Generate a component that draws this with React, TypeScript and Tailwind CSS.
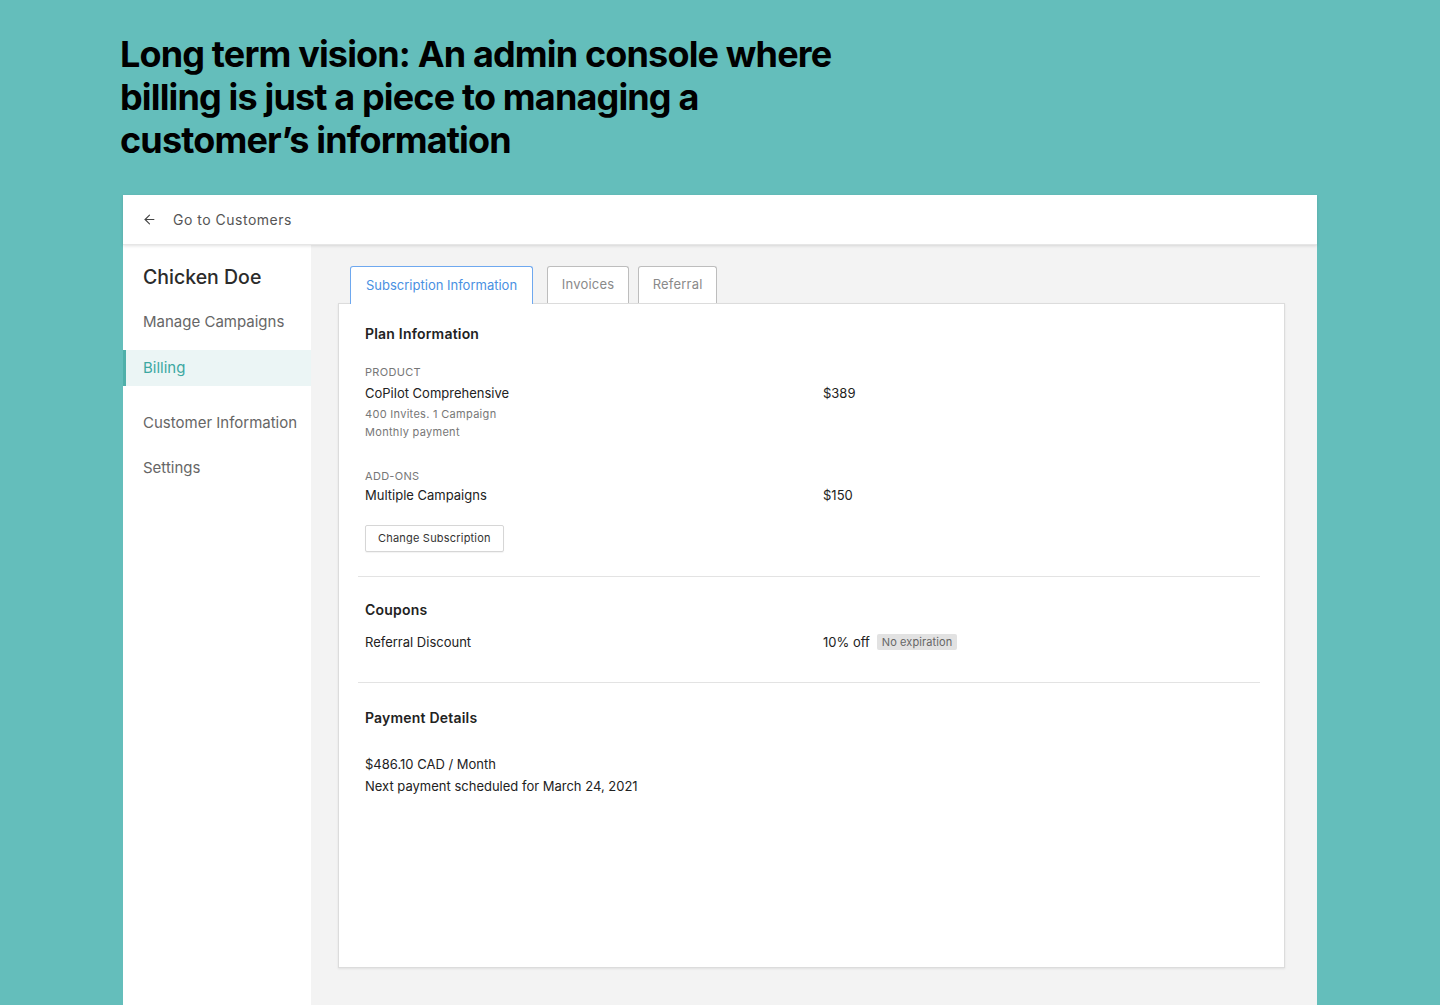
import { ArrowLeft } from 'lucide-react'

const font = { fontFamily: 'Inter, "Noto Sans", sans-serif' }

function Sidebar() {
  const items = [
    { label: 'Manage Campaigns', active: false, cls: 'mt-[19px] h-[28px]' },
    { label: 'Billing', active: true, cls: 'mt-[14px] h-[36px]' },
    { label: 'Customer Information', active: false, cls: 'mt-[19px] h-[36px]' },
    { label: 'Settings', active: false, cls: 'mt-[9px] h-[36px]' },
  ]
  return (
    <div className="w-[188px] shrink-0 bg-white pt-[20px]">
      <div className="pl-[20px] text-[19.5px] leading-[24px] text-[#2b2b2b] font-medium">Chicken Doe</div>
      {items.map(item => (
        <div
          key={item.label}
          className={`${item.cls} flex items-center text-[15px] tracking-[0px] ${
            item.active
              ? 'border-l-[3px] border-[#4fb0aa] bg-[#ebf5f5] pl-[17px] text-[#3ca8a2]'
              : 'pl-[20px] text-[#666]'
          }`}
        >
          {item.label}
        </div>
      ))}
    </div>
  )
}

function Tabs() {
  return (
    <div className="flex items-end gap-[14px] pl-[12px]">
      <div className="relative z-10 -mb-px h-[38px] px-[15px] flex items-center rounded-t-[3px] border border-b-0 border-[#6ea8ef] bg-white text-[13px] tracking-[0px] text-[#4a90e2]">
        Subscription Information
      </div>
      <div className="h-[37px] w-[82px] flex items-center justify-center rounded-t-[3px] border border-b-0 border-[#bdbdbd] bg-white text-[13px] tracking-[0.2px] text-[#8a8a8a]">
        Invoices
      </div>
      <div className="-ml-[5px] h-[37px] w-[79px] flex items-center justify-center rounded-t-[3px] border border-b-0 border-[#bdbdbd] bg-white text-[13px] tracking-[0.2px] text-[#8a8a8a]">
        Referral
      </div>
    </div>
  )
}

function Row({ left, right }: { left: React.ReactNode; right: React.ReactNode }) {
  return (
    <div className="flex">
      <div className="w-[458px]">{left}</div>
      <div>{right}</div>
    </div>
  )
}

export default function App() {
  return (
    <div className="min-h-[1005px] bg-[#64bebb] overflow-hidden" style={font}>
      <h1 className="pt-[33px] pl-[120px] text-[36px] leading-[43px] font-bold tracking-[-0.85px] text-black">
        Long term vision: An admin console where
        <br />
        billing is just a piece to managing a
        <br />
        customer’s information
      </h1>

      <div className="ml-[123px] mt-[33px] w-[1194px] h-[810px] flex flex-col bg-[#f3f3f3]">
        <div className="relative z-10 h-[50px] shrink-0 bg-white flex items-center pl-[19px] shadow-[0_1px_3px_rgba(0,0,0,0.12)] border-b border-[#e6e6e6]">
          <ArrowLeft size={15} strokeWidth={1.8} className="text-[#444]" />
          <span className="ml-[16px] text-[14px] tracking-[0.5px] text-[#555]">Go to Customers</span>
        </div>

        <div className="flex flex-1">
          <Sidebar />
          <div className="flex-1 pl-[27px] pt-[21px]">
            <Tabs />
            <div className="w-[947px] h-[665px] bg-white border border-[#dcdcdc] shadow-[0_1px_2px_rgba(0,0,0,0.08)] pt-[21px]">
              <div className="pl-[26px] pr-[24px]">
                <div className="text-[14px] leading-[18px] font-semibold text-[#222] tracking-[0.2px]">Plan Information</div>

                <div className="mt-[22px] text-[11px] leading-[14px] tracking-[0.3px] text-[#777]">PRODUCT</div>
                <Row
                  left={<div className="mt-[6px] text-[13px] leading-[16px] text-[#222] tracking-[0px]">CoPilot Comprehensive</div>}
                  right={<div className="mt-[6px] text-[13px] leading-[16px] text-[#222]">$389</div>}
                />
                <div className="mt-[6px] text-[11px] leading-[14px] tracking-[0.3px] text-[#777]">400 Invites. 1 Campaign</div>
                <div className="mt-[4px] text-[11px] leading-[14px] tracking-[0.3px] text-[#777]">Monthly payment</div>

                <div className="mt-[30px] text-[11px] leading-[14px] tracking-[0.3px] text-[#777]">ADD-ONS</div>
                <Row
                  left={<div className="mt-[4px] text-[13px] leading-[16px] text-[#222] tracking-[0px]">Multiple Campaigns</div>}
                  right={<div className="mt-[4px] text-[13px] leading-[16px] text-[#222]">$150</div>}
                />

                <button className="mt-[22px] h-[27px] px-[12px] border border-[#d6d6d6] rounded-[2px] bg-white text-[11px] tracking-[0.2px] text-[#333] shadow-[0_1px_1px_rgba(0,0,0,0.05)]">
                  Change Subscription
                </button>
              </div>

              <div className="ml-[19px] mr-[24px] mt-[24px] border-t border-[#e3e3e3]" />

              <div className="pl-[26px] pt-[24px]">
                <div className="text-[14px] leading-[18px] font-semibold text-[#222] tracking-[0.2px]">Coupons</div>
                <Row
                  left={<div className="mt-[15px] text-[13px] leading-[16px] text-[#222] tracking-[0px]">Referral Discount</div>}
                  right={
                    <div className="mt-[15px] flex items-center text-[13px] leading-[16px] text-[#222]">
                      10% off
                      <span className="ml-[7px] h-[16px] px-[5px] flex items-center bg-[#e2e2e2] rounded-[2px] text-[11px] tracking-[0.1px] text-[#666]">No expiration</span>
                    </div>
                  }
                />
              </div>

              <div className="ml-[19px] mr-[24px] mt-[32px] border-t border-[#e3e3e3]" />

              <div className="pl-[26px] pt-[26px]">
                <div className="text-[14px] leading-[18px] font-semibold text-[#222] tracking-[0.2px]">Payment Details</div>
                <div className="mt-[29px] text-[13px] leading-[16px] text-[#222] tracking-[0px]">$486.10 CAD / Month</div>
                <div className="mt-[6px] text-[13px] leading-[16px] text-[#222] tracking-[0px]">Next payment scheduled for March 24, 2021</div>
              </div>
            </div>
          </div>
        </div>
      </div>
    </div>
  )
}
